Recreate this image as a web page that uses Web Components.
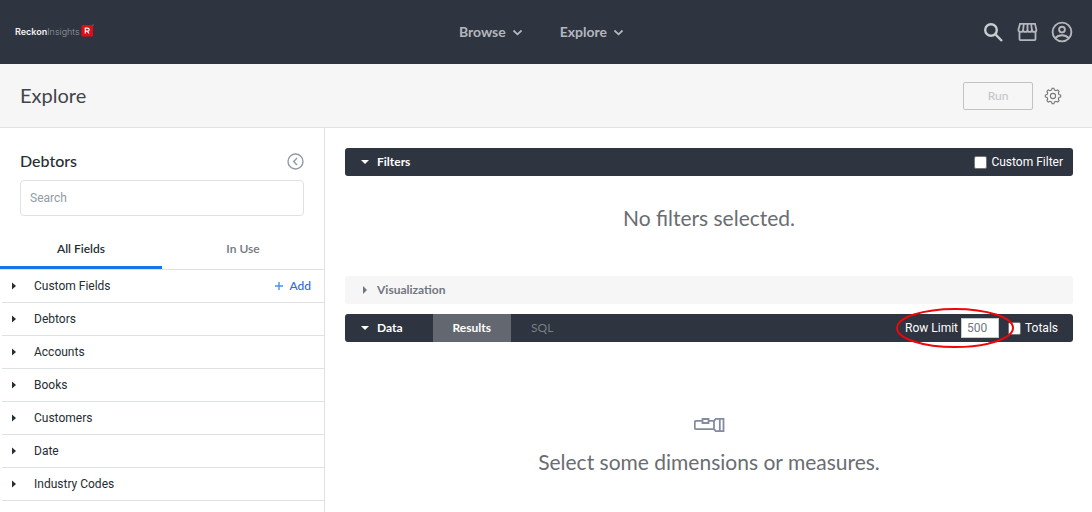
<!DOCTYPE html>
<html lang="en">
<head>
<meta charset="utf-8">
<title>Explore – Reckon Insights</title>
<style>
html, body { margin: 0; height: 100%; }
body { background: #fff; color: #262d33; font: 12px/16px Roboto, "Liberation Sans", sans-serif; --display: Lato, "Open Sans", sans-serif; --navy: #2e3440; --line: #dee1e5; }
</style>
</head>
<body>
<explore-page></explore-page>
<script>
const define = (name, html) => customElements.define(name, class extends HTMLElement {
  constructor() {
    super();
    const t = document.createElement('template');
    t.innerHTML = '<style>*{box-sizing:border-box}button,input{font:inherit;color:inherit}button{border:0;background:none;padding:0;cursor:pointer}svg{display:block;flex:none}</style>' + html;
    this.attachShadow({ mode: 'open' }).append(t.content.cloneNode(true));
  }
});

define('nav-menu', `
<style>
:host { display: block; }
button { display: flex; align-items: center; gap: 5px; color: #b4b7bc; font: 700 14px/20px var(--display); }
</style>
<button type="button"><slot></slot><svg width="13" height="12" viewBox="0 0 13 12" fill="none" stroke="currentColor" stroke-width="1.8"><path d="M2.5 4.5 6.5 8.3 10.5 4.5"/></svg></button>`);

define('top-bar', `
<style>
:host { display: grid; grid-template-columns: 1fr auto 1fr; align-items: center; height: 64px; padding: 0 19px 0 15px; background: var(--navy); color: #b4b7bc; }
.logo { display: flex; align-items: center; gap: 1px; width: max-content; text-decoration: none; color: #989ca3; font: 300 9px/16px Inter, sans-serif; }
.logo b { color: #f1f1f2; font-weight: 600; }
nav { display: flex; gap: 36px; padding-right: 4px; }
.tools { display: flex; justify-content: flex-end; align-items: center; gap: 13px; }
</style>
<a class="logo" href="#"><span><b>Reckon</b>Insights</span><svg width="13" height="16" viewBox="0 0 13 16" aria-hidden="true"><rect x=".5" y="1" width="11.500" height="11.500" rx="1.500" fill="#e50a17"/><path d="M4.300 9.500V4.200h2.400a1.400 1.400 0 0 1 0 2.900H4.300M6.300 7.100 8 9.500" fill="none" stroke="#fff" stroke-width="1.200"/><circle cx="12" cy="1" r=".6" fill="#999"/></svg></a>
<nav aria-label="Main"><nav-menu>Browse</nav-menu><nav-menu>Explore</nav-menu></nav>
<div class="tools">
<button type="button" aria-label="Search"><svg width="21" height="21" viewBox="0 0 21 21" fill="none" stroke="#c8ccd0" stroke-width="2.4"><circle cx="8" cy="8" r="5.8"/><path d="M12.2 12.2 19 19"/></svg></button>
<button type="button" aria-label="Marketplace"><svg width="21" height="20" viewBox="0 0 21 20" fill="none" stroke="currentColor" stroke-width="1.8"><path d="M2.5 10v7.3q0 .9.9.9h14.2q.9 0 .9-.9V10M3 1.900h15l1.400 6q0 2-2.200 2t-2.300-2q0 2-2.200 2t-2.200-2q0 2-2.200 2t-2.200-2q0 2-2.200 2-2.500 0-2.500-2zM6.800 2l-.7 6M10.500 2v6M14.200 2l.7 6"/></svg></button>
<button type="button" aria-label="Account"><svg width="22" height="22" viewBox="0 0 22 22" fill="none" stroke="currentColor" stroke-width="1.9"><circle cx="11" cy="11" r="9.4"/><circle cx="11" cy="8.6" r="2.9"/><path d="M4.3 17.2q2.6-2.9 6.7-2.9t6.700 2.900"/></svg></button>
</div>`);

define('title-bar', `
<style>
:host { display: flex; align-items: center; height: 64px; padding: 0 30px 0 20px; background: #f6f6f6; border-bottom: 1px solid #e1e1e2; }
h1 { flex: 1; margin: 0; padding-bottom: 2px; color: #41454a; font: 400 20px/28px var(--display); }
.run { width: 70px; height: 28px; margin-right: 11px; border: 1px solid #c1c3c5; border-radius: 2px; color: #c4c6c8; font: 500 12px/16px var(--display); }
</style>
<h1>Explore</h1>
<button class="run" type="button">Run</button>
<button type="button" aria-label="Settings"><svg width="18" height="18" viewBox="0 0 18 18" fill="none" stroke="#747679" stroke-width="1.1"><path d="M7.500 3.100 8.100 1.300h1.800l.6 1.800 1.500.6 1.700-.8 1.400 1.400-.8 1.700.6 1.500 1.800.6v1.800l-1.800.6-.6 1.500.8 1.700-1.400 1.400-1.700-.8-1.500.6-.6 1.800H8.100l-.6-1.800-1.500-.6-1.700.8-1.400-1.400.8-1.700-.6-1.500-1.800-.6V8.100l1.800-.6.6-1.500-.8-1.700 1.400-1.400 1.700.8z"/><circle cx="9" cy="9" r="2.600"/></svg></button>`);

define('field-row', `
<style>
:host { display: flex; align-items: center; height: 33px; margin-left: 2px; padding: 0 13px 0 10px; border-bottom: 1px solid var(--line); }
.name { display: flex; align-items: center; gap: 18px; }
</style>
<button class="name" type="button" aria-expanded="false"><svg width="4" height="8" viewBox="0 0 4 8"><path d="M0 .5 4 4 0 7.500z" fill="#262d33"/></svg><slot></slot></button>
<slot name="action"></slot>`);

define('field-picker', `
<style>
:host { display: block; border-right: 1px solid var(--line); padding-top: 20px; }
header { display: flex; align-items: center; justify-content: space-between; height: 28px; padding: 0 20px 2px; }
h2 { margin: 0; font: 500 16px/24px var(--display); }
.search { padding: 4px 20px 0; }
input { display: block; width: 100%; height: 36px; padding: 0 9px; border: 1px solid var(--line); border-radius: 4px; background: #fff; }
input::placeholder { color: #939ba5; opacity: 1; }
.tabs { display: grid; grid-template-columns: 1fr 1fr; height: 54px; border-bottom: 1px solid var(--line); }
.tabs button { padding-top: 16px; border-bottom: 3px solid transparent; color: #707781; font: 600 12px/16px var(--display); }
.tabs .on { border-color: #1a73e8; color: #262d33; }
.add { display: flex; align-items: center; gap: 6px; margin-left: auto; color: #2f6de0; font: 500 12px/16px var(--display); }
</style>
<header><h2>Debtors</h2><button type="button" aria-label="Collapse"><svg width="17" height="17" viewBox="0 0 17 17" fill="none" stroke="#939ba5" stroke-width="1.400"><circle cx="8.500" cy="8.500" r="7.500"/><path d="M10 5 6.700 8.500 10 12"/></svg></button></header>
<div class="search"><input type="search" placeholder="Search" aria-label="Search fields"></div>
<div class="tabs" role="tablist"><button class="on" type="button" role="tab" aria-selected="true">All Fields</button><button type="button" role="tab" aria-selected="false">In Use</button></div>
<field-row>Custom Fields<button class="add" type="button" slot="action"><svg width="8" height="8" viewBox="0 0 8 8" stroke="#4f8fee" stroke-width="1.400"><path d="M4 0v8M0 4h8"/></svg>Add</button></field-row>
<field-row>Debtors</field-row><field-row>Accounts</field-row><field-row>Books</field-row><field-row>Customers</field-row><field-row>Date</field-row><field-row>Industry Codes</field-row>`);

define('section-bar', `
<style>
:host { display: flex; align-items: stretch; height: 28px; border-radius: 3px; background: var(--navy); color: #fff; }
:host([closed]) { background: #f6f6f6; color: #707781; }
.title { display: flex; align-items: center; gap: 8px; padding: 0 30px 0 16px; font: 700 12px/16px var(--display); }
:host([closed]) svg { rotate: -90deg; }
</style>
<button class="title" type="button"><svg width="8" height="8" viewBox="0 0 8 8"><path d="M0 2h8L4 6z" fill="currentColor"/></svg><slot></slot></button>
<slot name="extra"></slot>`);

define('check-option', `
<style>
:host { display: flex; align-items: center; }
label { display: flex; align-items: center; gap: 4px; }
input { appearance: none; width: 13px; height: 13px; margin: 0; border: 1px solid #767676; border-radius: 2px; background: #fff; }
</style>
<label><input type="checkbox"><slot></slot></label>`);

define('row-limit', `
<style>
:host { position: relative; display: flex; align-items: center; }
label { display: flex; align-items: center; gap: 3px; }
input { width: 38px; height: 20px; padding: 0 5px; border: 1px solid #c8cacd; background: #fff; color: #707781; }
.mark { position: absolute; left: -10px; top: -6px; z-index: 1; pointer-events: none; }
</style>
<label>Row Limit<input type="text" value="500"></label>
<svg class="mark" width="120" height="40" viewBox="0 0 120 40" fill="none" stroke="#f00508" stroke-width="2" aria-hidden="true"><ellipse cx="60" cy="20" rx="58" ry="19"/></svg>`);

define('explore-page', `
<style>
:host { display: flex; flex-direction: column; min-height: 100vh; }
.body { flex: 1; display: grid; grid-template-columns: 325px minmax(0, 1fr); }
main { padding: 20px 19px 20px 20px; }
.empty { margin: 0; color: #6a6d71; text-align: center; font: 400 21px/28px var(--display); }
.filters { padding: 28px 0 44px; }
.data { margin-top: 10px; }
.right { margin-left: auto; padding-right: 10px; }
.group { display: flex; gap: 9px; margin-left: auto; padding-right: 15px; }
.tab { padding: 0 20px; color: #7a7e86; font: 400 12px/16px var(--display); }
.on { background: #636770; color: #fff; font-weight: 700; }
.light { margin: 76px auto 16px; }
</style>
<top-bar></top-bar>
<title-bar></title-bar>
<div class="body">
<field-picker></field-picker>
<main>
<section-bar>Filters<check-option class="right" slot="extra">Custom Filter</check-option></section-bar>
<p class="empty filters">No filters selected.</p>
<section-bar closed>Visualization</section-bar>
<section-bar class="data">Data<button class="tab on" type="button" slot="extra">Results</button><button class="tab" type="button" slot="extra">SQL</button><div class="group" slot="extra"><row-limit></row-limit><check-option>Totals</check-option></div></section-bar>
<svg class="light" width="31" height="14" viewBox="0 0 31 14" fill="none" stroke="#858ba0" stroke-width="1.800" aria-hidden="true"><path d="M8 2.800H2q-1.200 0-1.200 1.200v6q0 1.200 1.200 1.200h18V2.800H15M8.500 1h6v4h-6zM20 2.800 21.800.8h7.700v12.400h-7.700L20 11.200M25.800.8v12.400"/></svg>
<p class="empty">Select some dimensions or measures.</p>
</main>
</div>`);
</script>
</body>
</html>
